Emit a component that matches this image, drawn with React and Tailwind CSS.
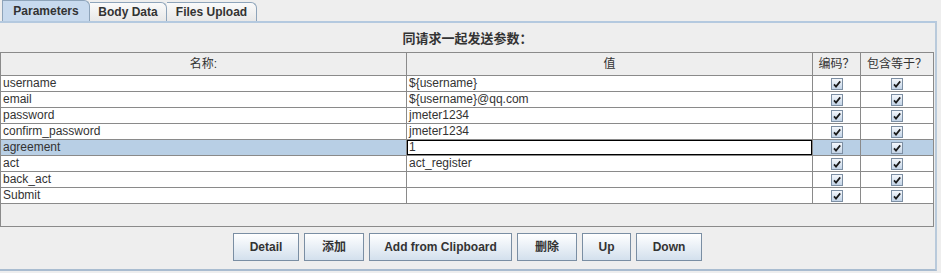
import React from 'react';

const rows = [
  { name: 'username', value: '${username}' },
  { name: 'email', value: '${username}@qq.com' },
  { name: 'password', value: 'jmeter1234' },
  { name: 'confirm_password', value: 'jmeter1234' },
  { name: 'agreement', value: '1', selected: true },
  { name: 'act', value: 'act_register' },
  { name: 'back_act', value: '' },
  { name: 'Submit', value: '' },
];

const buttons = [
  { label: 'Detail', w: 'w-[66px]' },
  { label: '添加', w: 'w-[60px]' },
  { label: 'Add from Clipboard', w: 'w-[143px]' },
  { label: '删除', w: 'w-[60px]' },
  { label: 'Up', w: 'w-[49px]' },
  { label: 'Down', w: 'w-[66px]' },
];

const CheckBox = () => (
  <span className="w-[12px] h-[12px] border border-[#7d8fa3] bg-gradient-to-b from-[#f5f8fc] to-[#c3d4e7] flex items-center justify-center">
    <svg width="10" height="10" viewBox="0 0 10 10">
      <path d="M2 5.4 L4 7.6 L8.2 2.4" fill="none" stroke="#1c1c1c" strokeWidth="1.7" />
    </svg>
  </span>
);

const App = () => {
  return (
    <div
      className="w-[941px] h-[273px] bg-[#eeeeee] text-[#333333] overflow-hidden flex flex-col"
      style={{ fontFamily: '"Liberation Sans", "Noto Sans CJK SC", sans-serif' }}
    >
      {/* tabs */}
      <div className="h-[21px] flex items-end pl-[2px] shrink-0">
        <div className="h-[21px] w-[88px] border-l border-t border-r border-[#8ea4ba] rounded-tr-[6px] bg-[#c8daee] flex items-center justify-center text-[12px] font-bold">
          Parameters
        </div>
        <div className="h-[19px] w-[77px] border-t border-r border-[#8ea4ba] rounded-tr-[6px] bg-gradient-to-b from-[#fafafa] to-[#e8e8e8] flex items-center justify-center text-[12px] font-bold">
          Body Data
        </div>
        <div className="h-[19px] w-[90px] border-t border-r border-[#8ea4ba] rounded-tr-[6px] bg-gradient-to-b from-[#fafafa] to-[#e8e8e8] flex items-center justify-center text-[12px] font-bold">
          Files Upload
        </div>
      </div>

      {/* panel */}
      <div className="w-[937px] h-[250px] border-t-2 border-t-[#b4c9df] border-r-2 border-r-[#b9cadb] border-b-2 border-b-[#a9bcd0] flex flex-col">
        <div className="h-[29px] flex items-center justify-center text-[13px] font-bold pt-[2px]">
          同请求一起发送参数：
        </div>

        {/* table */}
        <div className="w-[934px] h-[175px] border border-[#8a8a8a] flex flex-col">
          <div className="h-[23px] flex border-b border-[#8a8a8a] bg-[#eeeeee] text-[12px]">
            <div className="w-[406px] border-r border-[#8a8a8a] flex items-center justify-center">名称:</div>
            <div className="w-[406px] border-r border-[#8a8a8a] flex items-center justify-center">值</div>
            <div className="w-[48px] border-r border-[#8a8a8a] flex items-center justify-center">编码？</div>
            <div className="flex-1 flex items-center justify-center">包含等于？</div>
          </div>
          {rows.map((r) => (
            <div
              key={r.name}
              className={`h-[16px] flex border-b border-[#8a8a8a] text-[12px] leading-[15px] ${
                r.selected ? 'bg-[#b8cfe5]' : 'bg-white'
              }`}
            >
              <div className="w-[406px] border-r border-[#8a8a8a] pl-[2px]">{r.name}</div>
              {r.selected ? (
                <div className="w-[406px] border-r border-[#8a8a8a] bg-white">
                  <div className="h-[15px] border border-black pl-[1px] leading-[13px]">{r.value}</div>
                </div>
              ) : (
                <div className="w-[406px] border-r border-[#8a8a8a] pl-[2px]">{r.value}</div>
              )}
              <div className="w-[48px] border-r border-[#8a8a8a] flex items-center justify-center">
                <CheckBox />
              </div>
              <div className="flex-1 flex items-center justify-center">
                <CheckBox />
              </div>
            </div>
          ))}
          <div className="flex-1 bg-[#eeeeee]" />
        </div>

        {/* buttons */}
        <div className="flex-1 flex items-start justify-center gap-[5px] pt-[6px]">
          {buttons.map((b) => (
            <button
              key={b.label}
              className={`${b.w} h-[28px] border border-[#7a8ea3] bg-gradient-to-b from-[#ffffff] to-[#d3e0ed] text-[12px] font-bold text-[#333333]`}
            >
              {b.label}
            </button>
          ))}
        </div>
      </div>
    </div>
  );
};

export default App;
